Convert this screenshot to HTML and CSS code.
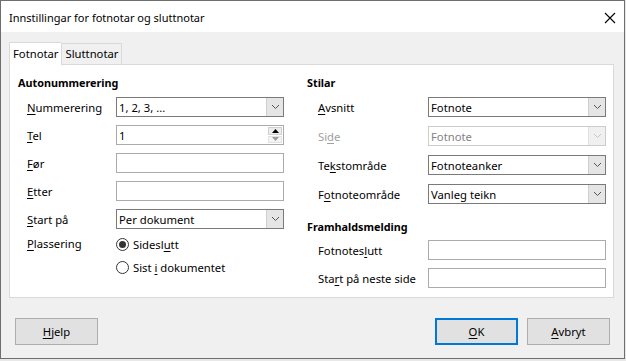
FILE: index.html
```html
<!DOCTYPE html>
<html>
<head>
    <title>Innstillingar for fotnotar og sluttnotar</title>
    <meta name="viewport" content="width=device-width, initial-scale=1">
    <link rel="stylesheet" href="styles.css">
</head>
<body>
    <div class="window">
        <div class="titlebar">
            <span class="title">Innstillingar for fotnotar og sluttnotar</span>
            <svg class="close" width="12" height="12" viewBox="0 0 12 12">
                <path d="M1 1 L11 11 M11 1 L1 11" stroke="#000" stroke-width="1.1" fill="none"/>
            </svg>
        </div>
        <div class="dialog">
            <div class="tabs">
                <div class="tab tab_active">Fotnotar</div>
                <div class="tab">Sluttnotar</div>
            </div>
            <div class="panel">
                <div class="col col_left">
                    <div class="heading">Autonummerering</div>
                    <div class="form form_left">
                        <div class="label"><u>N</u>ummerering</div>
                        <div class="combo">
                            <span class="value">1, 2, 3, ...</span>
                            <span class="arrow"><svg width="9" height="6" viewBox="0 0 9 6"><path d="M1 1 L4.5 4.5 L8 1" stroke="#555" fill="none"/></svg></span>
                        </div>

                        <div class="label"><u>T</u>el</div>
                        <div class="spin">
                            <span class="value">1</span>
                            <span class="spin_btns">
                                <span class="spin_up"><svg width="7" height="4" viewBox="0 0 7 4"><path d="M0 4 L3.5 0 L7 4 Z" fill="#000"/></svg></span>
                                <span class="spin_down"><svg width="7" height="4" viewBox="0 0 7 4"><path d="M0 0 L3.5 4 L7 0 Z" fill="#9a9a9a"/></svg></span>
                            </span>
                        </div>

                        <div class="label"><u>F</u>ør</div>
                        <div class="entry"></div>

                        <div class="label"><u>E</u>tter</div>
                        <div class="entry"></div>

                        <div class="label"><u>S</u>tart på</div>
                        <div class="combo">
                            <span class="value">Per dokument</span>
                            <span class="arrow"><svg width="9" height="6" viewBox="0 0 9 6"><path d="M1 1 L4.5 4.5 L8 1" stroke="#555" fill="none"/></svg></span>
                        </div>

                        <div class="label label_radio"><u>P</u>lassering</div>
                        <div class="radios">
                            <div class="radio"><span class="dot dot_on"></span><span>Sidesl<u>u</u>tt</span></div>
                            <div class="radio"><span class="dot"></span><span>Sist <u>i</u> dokumentet</span></div>
                        </div>
                    </div>
                </div>

                <div class="col col_right">
                    <div class="heading">Stilar</div>
                    <div class="form form_right">
                        <div class="label"><u>A</u>vsnitt</div>
                        <div class="combo">
                            <span class="value">Fotnote</span>
                            <span class="arrow"><svg width="9" height="6" viewBox="0 0 9 6"><path d="M1 1 L4.5 4.5 L8 1" stroke="#555" fill="none"/></svg></span>
                        </div>

                        <div class="label label_off">Si<u>d</u>e</div>
                        <div class="combo combo_off">
                            <span class="value">Fotnote</span>
                            <span class="arrow"><svg width="9" height="6" viewBox="0 0 9 6"><path d="M1 1 L4.5 4.5 L8 1" stroke="#c4c4c4" fill="none"/></svg></span>
                        </div>

                        <div class="label">Te<u>k</u>stområde</div>
                        <div class="combo">
                            <span class="value">Fotnoteanker</span>
                            <span class="arrow"><svg width="9" height="6" viewBox="0 0 9 6"><path d="M1 1 L4.5 4.5 L8 1" stroke="#555" fill="none"/></svg></span>
                        </div>

                        <div class="label">F<u>o</u>tnoteområde</div>
                        <div class="combo">
                            <span class="value">Vanleg teikn</span>
                            <span class="arrow"><svg width="9" height="6" viewBox="0 0 9 6"><path d="M1 1 L4.5 4.5 L8 1" stroke="#555" fill="none"/></svg></span>
                        </div>
                    </div>

                    <div class="heading heading_second">Framhaldsmelding</div>
                    <div class="form form_right form_tight">
                        <div class="label">Fotnotes<u>l</u>utt</div>
                        <div class="entry"></div>

                        <div class="label">Sta<u>r</u>t på neste side</div>
                        <div class="entry"></div>
                    </div>
                </div>
            </div>
            <div class="buttons">
                <button class="button"><u>H</u>jelp</button>
                <div class="spacer"></div>
                <button class="button button_default"><u>O</u>K</button>
                <button class="button"><u>A</u>vbryt</button>
            </div>
        </div>
    </div>
</body>
</html>
```

FILE: styles.css
```css
html {
	font-family: "Noto Sans", "Open Sans", sans-serif;
	font-size: 11.25px;
	color: #000;
  }
  body {
	margin: 0;
	background-color: #e8e8e8;
  }
  u {
	text-decoration: underline;
	text-underline-offset: 2px;
  }
  .window {
	width: 623px;
	height: 357px;
	border: 1px solid #6e6e6e;
	background-color: #f0f0f0;
	display: flex;
	flex-direction: column;
  }
  .titlebar {
	height: 31px;
	background-color: #fff;
	display: flex;
	align-items: center;
	padding: 0 8px 0 8px;
  }
  .title {
	flex: 1;
	font-size: 11px;
	padding-top: 2px;
  }
  .close {
	margin-top: 2px;
  }
  .dialog {
	flex: 1;
	padding: 10px 14px 0 8px;
	display: flex;
	flex-direction: column;
  }
  .tabs {
	display: flex;
	align-items: flex-end;
	height: 22px;
  }
  .tab {
	height: 20px;
	line-height: 20px;
	padding: 0 3px;
	border: 1px solid #d9d9d9;
	border-bottom: none;
	background-color: #f0f0f0;
  }
  .tab_active {
	height: 22px;
	line-height: 22px;
	background-color: #fff;
	border-right: none;
	margin-bottom: -1px;
	position: relative;
	z-index: 1;
  }
  .panel {
	width: 589px;
	margin-right: -4px;
	height: 222px;
	border: 1px solid #d9d9d9;
	background-color: #fff;
	padding: 10px 6px 0 8px;
	display: flex;
  }
  .col_left {
	width: 266px;
  }
  .col_right {
	width: 299px;
	margin-left: 23px;
  }
  .heading {
	font-weight: bold;
	font-size: 10.8px;
	height: 16px;
	line-height: 16px;
	margin-bottom: 6px;
  }
  .heading_second {
	margin-top: 15px;
	margin-bottom: 5px;
  }
  .form {
	display: grid;
	align-items: center;
  }
  .form_left {
	margin-left: 9px;
	grid-template-columns: 89px 168px;
	row-gap: 8px;
  }
  .form_right {
	margin-left: 11px;
	grid-template-columns: 110px 178px;
	row-gap: 9px;
  }
  .form_tight {
	row-gap: 8px;
  }
  .label {
	white-space: nowrap;
  }
  .label_radio {
	align-self: start;
	height: 18px;
	line-height: 18px;
	margin-top: -2px;
  }
  .label_off {
	color: #a0a0a0;
  }
  .combo, .spin, .entry {
	height: 20px;
	box-sizing: border-box;
	display: flex;
	align-items: center;
	background-color: #fff;
  }
  .combo {
	border: 1px solid #7a7a7a;
  }
  .combo_off {
	border-color: #cccccc;
	color: #838383;
  }
  .spin, .entry {
	border: 1px solid #ababab;
  }
  .value {
	flex: 1;
	padding-left: 2px;
	white-space: nowrap;
  }
  .arrow {
	width: 17px;
	height: 100%;
	box-sizing: border-box;
	background-color: #e5e5e5;
	border-left: 1px solid #cfcfcf;
	display: flex;
	align-items: center;
	justify-content: center;
  }
  .combo_off .arrow {
	background-color: #f0f0f0;
	border-left-color: #e0e0e0;
  }
  .spin_btns {
	width: 15px;
	height: 100%;
	display: flex;
	flex-direction: column;
	padding: 1px 1px 1px 0;
	box-sizing: border-box;
	gap: 1px;
  }
  .spin_up, .spin_down {
	flex: 1;
	display: flex;
	align-items: center;
	justify-content: center;
	border: 1px solid #d0d0d0;
	background-color: #ececec;
  }
  .spin_down {
	background-color: #f4f4f4;
	border-color: #e2e2e2;
  }
  .radios {
	display: flex;
	flex-direction: column;
	gap: 5px;
	margin-top: -2px;
  }
  .radio {
	height: 18px;
	display: flex;
	align-items: center;
	white-space: nowrap;
  }
  .dot {
	width: 11px;
	height: 11px;
	border: 1px solid #333;
	border-radius: 50%;
	margin-right: 4px;
	display: flex;
	align-items: center;
	justify-content: center;
	background-color: #fff;
  }
  .dot_on::after {
	content: "";
	width: 7px;
	height: 7px;
	border-radius: 50%;
	background-color: #333;
  }
  .buttons {
	display: flex;
	margin-top: 20px;
	padding-left: 6px;
	gap: 9px;
  }
  .spacer {
	flex: 1;
  }
  .button {
	width: 83px;
	height: 27px;
	font-family: inherit;
	font-size: 11.25px;
	color: #000;
	background-color: #e1e1e1;
	border: 1px solid #adadad;
	padding: 0;
	-webkit-user-select: none;
	user-select: none;
  }
  .button_default {
	border: 2px solid #0078d7;
  }
```
